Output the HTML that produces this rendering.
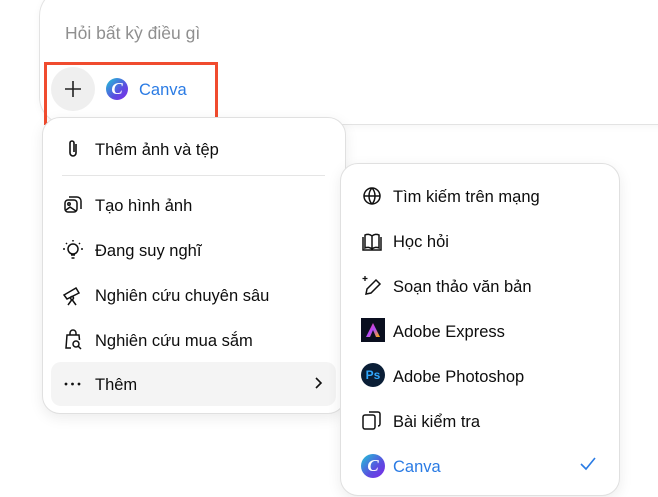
<!DOCTYPE html>
<html><head><meta charset="utf-8"><style>
body{margin:0;width:658px;height:497px;background:#fff;font-family:"Liberation Sans",sans-serif;position:relative;overflow:hidden;color:#0d0d0d}
.card{position:absolute;left:39px;top:-12px;width:700px;height:135px;border:1px solid #e3e3e3;border-radius:28px;box-shadow:0 2px 8px rgba(0,0,0,.04)}
.ph{position:absolute;left:65px;top:23px;font-size:17.5px;color:#8f8f8f}
.red{position:absolute;left:44px;top:62px;width:168px;height:57px;border:3px solid #f04b2e}
.plus{position:absolute;left:51px;top:67px;width:44px;height:44px;border-radius:50%;background:#efefef}
.canvaic{position:absolute;width:22px;height:22px;border-radius:50%;background:linear-gradient(135deg,#1fc6d6,#5b4de0 60%,#7d2ae8);color:#fff;font-family:"Liberation Serif",serif;font-style:italic;font-weight:bold;font-size:17px;line-height:22px;text-align:center}
.menu{position:absolute;background:#fff;border:1px solid #e0e0e0;border-radius:18px;box-shadow:0 4px 14px rgba(0,0,0,.08)}
.it{position:absolute;font-size:16.5px;line-height:20px;white-space:nowrap}
svg{position:absolute}
</style></head><body>
<div class="card"></div>
<div class="ph">Hỏi bất kỳ điều gì</div>
<div class="plus"></div>
<svg style="left:62px;top:78px" width="22" height="22" viewBox="0 0 22 22"><path d="M11 3v16M3 11h16" stroke="#222" stroke-width="1.6"/></svg>
<div class="canvaic" style="left:106px;top:78px">C</div>
<div class="it" style="left:139px;top:80px;color:#2a7be4">Canva</div>
<div class="red"></div>

<div class="menu" style="left:42px;top:117px;width:302px;height:295px"></div>
<div style="position:absolute;left:62px;top:175px;width:263px;height:1px;background:#e5e5e5"></div>
<div style="position:absolute;left:51px;top:362px;width:285px;height:44px;border-radius:10px;background:#f4f4f4"></div>
<svg style="left:64px;top:139px" width="18" height="20" viewBox="0 0 18 20" fill="none" stroke="#111" stroke-width="1.6"><path d="M12 5v9a3 3 0 0 1-6 0V4a2 2 0 0 1 4 0v9"/></svg>
<div class="it" style="left:95px;top:140px">Thêm ảnh và tệp</div>
<svg style="left:63px;top:195px" width="20" height="20" viewBox="0 0 20 20" fill="none" stroke="#111" stroke-width="1.5"><rect x="2" y="5" width="12" height="12" rx="3"/><path d="M6 2h8a4 4 0 0 1 4 4v8"/><circle cx="6" cy="9" r="1.2"/><path d="M3 15l4-3 6 4"/></svg>
<div class="it" style="left:95px;top:196px">Tạo hình ảnh</div>
<svg style="left:62px;top:239px" width="22" height="22" viewBox="0 0 22 22" fill="none" stroke="#111" stroke-width="1.5"><circle cx="11" cy="10" r="5"/><path d="M9 16h4M9.5 19h3M1 10h2M19 10h2M4 4l1 1M17 5l1-1M11 1v1.5"/></svg>
<div class="it" style="left:95px;top:241px">Đang suy nghĩ</div>
<svg style="left:62px;top:284px" width="22" height="22" viewBox="0 0 22 22" fill="none" stroke="#111" stroke-width="1.5"><path d="M2 11l12-7 3 5-12 6z"/><circle cx="10" cy="14" r="1.5"/><path d="M10 15.5L6 21M10 15.5l4 5.5"/></svg>
<div class="it" style="left:95px;top:286px">Nghiên cứu chuyên sâu</div>
<svg style="left:63px;top:329px" width="22" height="22" viewBox="0 0 22 22" fill="none" stroke="#111" stroke-width="1.5"><path d="M7 6V4a3 3 0 0 1 6 0v2M8 19H3L4 6h12l.5 5"/><circle cx="13" cy="15" r="3"/><path d="M15 17l3 3"/></svg>
<div class="it" style="left:95px;top:331px">Nghiên cứu mua sắm</div>
<svg style="left:63px;top:380px" width="20" height="8" viewBox="0 0 20 8" fill="#111"><circle cx="3" cy="4" r="1.4"/><circle cx="9.5" cy="4" r="1.4"/><circle cx="16" cy="4" r="1.4"/></svg>
<div class="it" style="left:95px;top:375px">Thêm</div>
<svg style="left:312px;top:376px" width="12" height="14" viewBox="0 0 12 14" fill="none" stroke="#111" stroke-width="1.6"><path d="M4 2l5 5-5 5"/></svg>

<div class="menu" style="left:340px;top:163px;width:278px;height:331px"></div>
<svg style="left:362px;top:186px" width="20" height="20" viewBox="0 0 20 20" fill="none" stroke="#111" stroke-width="1.5"><circle cx="10" cy="10" r="8"/><path d="M2 10h16M10 2c-4 4-4 12 0 16M10 2c4 4 4 12 0 16"/></svg>
<div class="it" style="left:393px;top:187px">Tìm kiếm trên mạng</div>
<svg style="left:362px;top:231px" width="20" height="20" viewBox="0 0 20 20" fill="none" stroke="#111" stroke-width="1.5"><path d="M10 5v13M10 5C8 3 5 3 3 4v13c2-1 5-1 7 1 2-2 5-2 7-1V4c-2-1-5-1-7 1M1 6v13h18V6"/></svg>
<div class="it" style="left:393px;top:232px">Học hỏi</div>
<svg style="left:361px;top:275px" width="22" height="22" viewBox="0 0 22 22" fill="none" stroke="#111" stroke-width="1.5"><path d="M5 19l1-5 9-9 4 4-9 9z"/><path d="M4 1v5M1.5 3.5h5" stroke-width="1.3"/></svg>
<div class="it" style="left:393px;top:277px">Soạn thảo văn bản</div>
<div style="position:absolute;left:361px;top:318px;width:24px;height:24px;background:#0a0f1f"></div>
<svg style="left:364px;top:321px" width="18" height="18" viewBox="0 0 18 18"><defs><linearGradient id="g" x1="0" y1="0" x2="1" y2="1"><stop offset="0" stop-color="#ff3b7a"/><stop offset=".5" stop-color="#b14bff"/><stop offset="1" stop-color="#ffb400"/></linearGradient></defs><path d="M9 2L16 16h-4l-3-7-3 7H2z" fill="url(#g)"/></svg>
<div class="it" style="left:393px;top:322px">Adobe Express</div>
<div style="position:absolute;left:361px;top:363px;width:24px;height:24px;border-radius:50%;background:#0a1e36;color:#31a8ff;font-weight:bold;font-size:12px;line-height:24px;text-align:center">Ps</div>
<div class="it" style="left:393px;top:367px">Adobe Photoshop</div>
<svg style="left:361px;top:409px" width="22" height="22" viewBox="0 0 22 22" fill="none" stroke="#111" stroke-width="1.5"><rect x="2" y="6" width="12" height="14" rx="2"/><path d="M8 3h9a2 2 0 0 1 2 2v10a2 2 0 0 1-2 2"/></svg>
<div class="it" style="left:393px;top:412px">Bài kiểm tra</div>
<div class="canvaic" style="left:361px;top:454px;width:24px;height:24px;line-height:24px">C</div>
<div class="it" style="left:393px;top:457px;color:#2a7be4">Canva</div>
<svg style="left:579px;top:456px" width="18" height="16" viewBox="0 0 18 16" fill="none" stroke="#2a7be4" stroke-width="1.6"><path d="M2 8l5 5 9-11"/></svg>
</body></html>
